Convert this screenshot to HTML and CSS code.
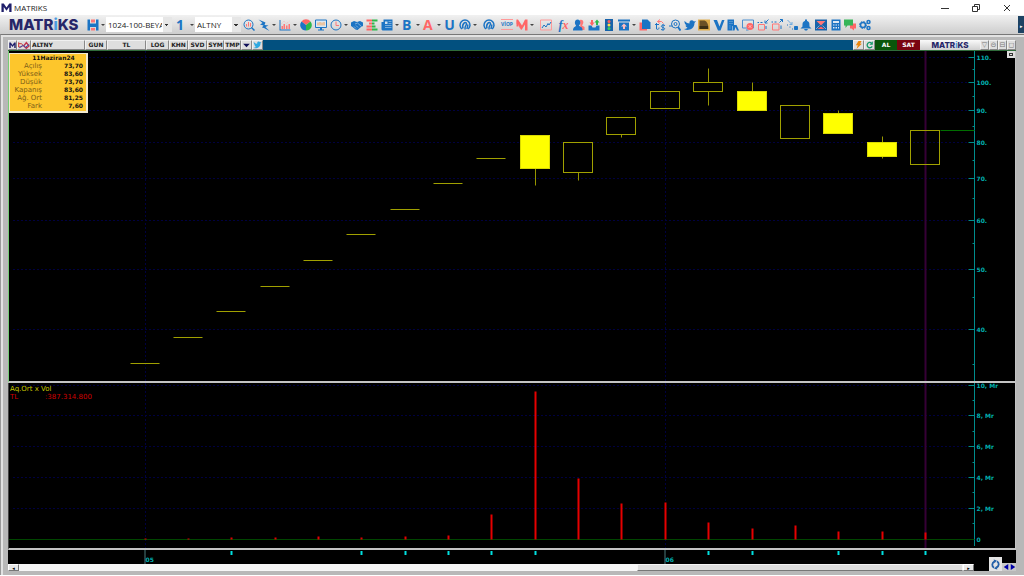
FILE: index.html
```html
<!DOCTYPE html>
<html lang="tr">
<head>
<meta charset="UTF-8">
<meta name="viewport" content="width=device-width, initial-scale=1.0">
<title>MATRIKS</title>
<link rel="stylesheet" href="styles.css">
</head>
<body>

<header class="titlebar">
  <svg class="app-icon" viewBox="0 0 24 24"><path d="M1 22V3h5l6 9 6-9h5v19h-5V11l-6 8-6-8v11z" fill="#1f1f6b"/></svg>
  <h1>MATRIKS</h1>
  <div class="window-buttons">
    <button aria-label="Küçült"><svg viewBox="0 0 8 8"><path d="M0 4.500h8"/></svg></button>
    <button aria-label="Önceki boyut"><svg viewBox="0 0 8 8"><path d="M.5 2.500h5v5h-5zM2.500 2V.5h5v5H6"/></svg></button>
    <button aria-label="Kapat"><svg viewBox="0 0 8 8"><path d="M1 1l6 6M7 1L1 7"/></svg></button>
  </div>
</header>

<nav class="toolbar">
  <div class="logo">MATR<span>i</span>KS</div>
  <div class="group files">
    <button class="drop" aria-label="Kaydet"><svg viewBox="0 0 24 24"><path d="M1 1h5v8h12V1h5v22h-5v-7H6v7H1z" fill="#1c74c4"/><path d="M8 1h8v6H8z" fill="#f77"/><path d="M8 18h8v5H8z" fill="#f77"/></svg></button>
    <select class="template" aria-label="Şablon"><option>1024-100-BEYAZ</option></select>
    <button class="drop letter" aria-label="Bir">1</button>
    <select class="symbol" aria-label="Sembol"><option>ALTNY</option></select>
  </div>
  <div class="group">
    <button aria-label="Grafik ara"><svg viewBox="0 0 24 24" fill="none" stroke="#1c74c4" stroke-width="2"><circle cx="11" cy="11" r="9"/><path d="M17 17l6 6" stroke-width="3"/><path d="M7 15v-5M11 15V6M15 15V8" stroke="#f77"/></svg></button>
    <button class="drop" aria-label="Çizgi"><svg viewBox="0 0 24 24"><path d="M1 1l14 6-2 5 8 1-6 3 8 8-11-6-4-1 3-4-7-2 5-3z" fill="#1c74c4"/></svg></button>
    <button class="drop" aria-label="Göstergeler"><svg viewBox="0 0 24 24"><path d="M1 2h2v19h20v2H1z" fill="#1c74c4"/><path d="M5 14h3v6H5zM9 10h3v10H9zM14 13h3v7h-3zM19 10h3v10h-3z" fill="#f77"/><path d="M5 9l5-5 5 5 6-5" fill="none" stroke="#f99" stroke-width="1" stroke-dasharray="2 2"/></svg></button>
    <button aria-label="Pasta"><svg viewBox="0 0 24 24"><path d="M12 12L3 5A11 11 0 0 1 21 5z" fill="#f66"/><path d="M12 12l9-7a11 11 0 0 1-9 18z" fill="#2db84c"/><path d="M12 12v11A11 11 0 0 1 3 5z" fill="#1c74c4"/></svg></button>
    <button aria-label="Ekran"><svg viewBox="0 0 24 24"><path d="M1 2h22v15H1z" fill="#d8e8f5" stroke="#1c74c4" stroke-width="2"/><path d="M10 17h4v4h4v2H6v-2h4z" fill="#1c74c4"/><path d="M6 13V7M10 13V6M14 13V7M18 13V6" stroke="#f8a050" stroke-width="2"/></svg></button>
    <button class="drop" aria-label="Saat"><svg viewBox="0 0 24 24" fill="none"><circle cx="12" cy="12" r="10" stroke="#1c74c4" stroke-width="2"/><path d="M12 5v8h6" stroke="#f77" stroke-width="2"/></svg></button>
    <button aria-label="Takas"><svg viewBox="0 0 24 24"><path d="M0 7l6-3 6 2 6-2 6 3v7l-4 2-7 6-4-1-6-5-3-2z" fill="#1c74c4"/><path d="M8 10l5-2 8 7M6 15l4 4M10 13l4 4" fill="none" stroke="#dfe9f3" stroke-width="1"/></svg></button>
    <button aria-label="Derinlik"><svg viewBox="0 0 24 24"><path d="M1 1h11v4H1zM6 7h6v4H6zM1 13h11v4H1zM1 19h11v4H1z" fill="#f66"/><path d="M12 1h11v4H12zM12 7h5v4h-5zM12 13h7v4h-7zM12 19h11v4H12z" fill="#2db84c"/></svg></button>
    <button class="drop" aria-label="Haberler"><svg viewBox="0 0 24 24"><path d="M5 1h18v22H3l-2-2V6h4z" fill="#1c74c4"/><path d="M8 5h5v5H8zM15 5h6v1h-6zM15 9h6v1h-6zM8 13h13v1H8zM8 17h13v1H8z" fill="#cfe1f2"/></svg></button>
    <button class="drop letter" aria-label="B">B</button>
    <button class="drop letter red" aria-label="A">A</button>
    <button class="letter" aria-label="U">U</button>
    <button class="drop" aria-label="Tarama"><svg viewBox="0 0 24 24" fill="none" stroke="#1c74c4"><path d="M6 20A10 10 0 1 1 18 20" stroke-width="3"/><path d="M8 19C5 10 13 4 15 9c1 3-4 4-3 12M17 11c2 3-1 5-1 9" stroke-width="3"/></svg></button>
  </div>
  <div class="group">
    <button aria-label="Kahin"><svg viewBox="0 0 24 24" fill="none" stroke="#1c74c4"><path d="M6 20A10 10 0 1 1 18 20" stroke-width="3"/><path d="M8 19C5 10 13 4 15 9c1 3-4 4-3 12M17 11c2 3-1 5-1 9" stroke-width="3"/></svg></button>
  </div>
  <div class="group">
    <button class="viop" aria-label="VIOP">VİOP</button>
    <button class="drop" aria-label="Matriks"><svg viewBox="0 0 24 24"><path d="M1 2l9 14V22L1 9z" fill="#f88"/><path d="M1 1h3l8 12 6-12h5v22h-5V11l-7 11L4 10v5H1z" fill="#f66"/></svg></button>
  </div>
  <div class="group">
    <button aria-label="Çizgi grafik"><svg viewBox="0 0 24 24" fill="none"><path d="M1 2h22v20H1z" stroke="#f99" stroke-width="2"/><path d="M4 18l4-6 4 4 4-7 2 3 4-6" stroke="#1c74c4" stroke-width="2"/></svg></button>
  </div>
  <div class="group">
    <button class="fx" aria-label="Fonksiyon"><i>f</i><i class="red">x</i></button>
    <button aria-label="Kullanıcılar"><svg viewBox="0 0 24 24"><path d="M14 2c7-2 9 6 4 11l5 3v6h-8z" fill="#f77"/><path d="M9 1c7 0 7 9 3 12 1 3 8 2 7 10H0c0-8 6-7 6-10C2 8 4 1 9 1z" fill="#1c74c4"/></svg></button>
    <button aria-label="Al ver"><svg viewBox="0 0 24 24"><path d="M1 13h6l2 4h6l2-4h6v10H1z" fill="#1c74c4"/><path d="M6 2h4v5h3l-5 7-5-7h3z" fill="#f66"/><path d="M16 12h4V7h3l-5-6-5 6h3z" fill="#2db84c"/></svg></button>
    <button aria-label="Sinyal"><svg viewBox="0 0 24 24"><path d="M4 0h16v24H4z" fill="#1763aa"/><circle cx="12" cy="5" r="3" fill="#ff5c5c"/><circle cx="12" cy="12" r="3" fill="#ffe14a"/><circle cx="12" cy="19" r="3" fill="#35d35c"/></svg></button>
    <button class="drop" aria-label="Yükle"><svg viewBox="0 0 24 24"><path d="M0 1h24v4H0zM2 7h20v16H2z" fill="#1c74c4"/><path d="M12 9l6 6h-4v5h-4v-5H6z" fill="#fbb"/></svg></button>
    <button aria-label="Kopyala"><svg viewBox="0 0 24 24"><path d="M1 7h15v16H1z" fill="#f66"/><path d="M6 1h11l6 6v13H6z" fill="#1c74c4"/></svg></button>
    <button aria-label="Döviz"><svg viewBox="0 0 24 24" fill="none"><path d="M7 5h8l4 4M12 1L7 5l5 4" stroke="#f77" stroke-width="2"/><path d="M2 11h8M5 8v12c3 2 5 0 5-3" stroke="#1c74c4" stroke-width="2"/><path d="M22 13c-7-3-10 3-4 4s3 7-4 4M18 10v13" stroke="#1c74c4" stroke-width="2"/></svg></button>
  </div>
  <div class="group tools">
    <button aria-label="Ara"><svg viewBox="0 0 24 24" fill="none" stroke="#1c74c4"><circle cx="13" cy="10" r="8" stroke-width="2"/><circle cx="13" cy="10" r="3" stroke-width="2"/><path d="M18 16l5 7" stroke-width="4"/><path d="M0 14h7" stroke-width="2"/></svg></button>
    <button aria-label="Twitter"><svg viewBox="0 0 24 24"><path d="M1 4q5 5 10 5c-1-7 6-8 9-4l4-1-3 4C21 20 8 25 0 20q5 0 7-3-4-1-4-4h2Q0 9 1 4z" fill="#1c74c4"/></svg></button>
    <button aria-label="D"><svg viewBox="0 0 24 24"><path d="M0 1h24v22H0z" fill="#e0ac4a"/><path d="M3 3h10q8 3 8 17H3z" fill="#6b5026"/><path d="M3 14h17v6H3z" fill="#3d2e14"/></svg></button>
    <button aria-label="V"><svg viewBox="0 0 24 24"><path d="M1 2h7l5 13 5-13h5l-8 21h-5z" fill="#1c74c4"/></svg></button>
    <button aria-label="Şirketler"><svg viewBox="0 0 24 24"><path d="M1 1h13v11h5l5 11h-4l-3-7-2 7H1z" fill="#1c74c4"/><path d="M5 5h2M9 5h2M5 9h2M9 9h2M5 14h2M5 18h2M11 14v9" stroke="#dce8f4" stroke-width="1"/></svg></button>
    <button aria-label="Ekran kapat"><svg viewBox="0 0 24 24" fill="none"><path d="M1 2h22v16H1zM8 22h5" stroke="#4b8fd0" stroke-width="2"/><circle cx="16" cy="15" r="7" fill="#f66"/><path d="M13 12l6 6M19 12l-6 6" stroke="#fff" stroke-width="1"/></svg></button>
    <button aria-label="İçeri"><svg viewBox="0 0 24 24" fill="none"><path d="M3 11h12v11H3z" stroke="#f77" stroke-width="2"/><path d="M1 7h3M7 7h4M23 1l-6 6M16 3v5h5M18 14v6" stroke="#1c74c4" stroke-width="2"/></svg></button>
    <button aria-label="Dışarı"><svg viewBox="0 0 24 24" fill="none"><path d="M3 10h13v12H3z" stroke="#f77" stroke-width="2"/><path d="M1 6h3M7 6h4M17 7l6-6M18 1h5v5M20 13v7" stroke="#1c74c4" stroke-width="2"/></svg></button>
    <button aria-label="Taşı"><svg viewBox="0 0 24 24" fill="none" stroke="#1c74c4" stroke-width="2"><path d="M3 2l9 9M12 6v5H7" stroke="#6eaade"/><path d="M17 15h6v6h-6z" fill="#1c74c4"/><path d="M2 12h2M7 16h2M12 20h2"/></svg></button>
    <button aria-label="Alarm"><svg viewBox="0 0 24 24"><path d="M10 1h4v3c5 1 5 5 5 11l4 4H1l4-4C5 9 5 5 10 4zM8 20h8l-2 3h-4z" fill="#1c74c4"/></svg></button>
    <button aria-label="Mesaj"><svg viewBox="0 0 24 24"><path d="M0 1h24v22H0z" fill="#1763aa"/><path d="M3 4h18l-9 9z" fill="#f77"/><path d="M2 20l7-7M22 20l-7-7" stroke="#e6eef6" stroke-width="1"/><path d="M5 20l7-5 7 5z" fill="#f66"/></svg></button>
    <button aria-label="Hesap makinesi"><svg viewBox="0 0 24 24"><path d="M3 1h18v22H3z" fill="#1c74c4"/><path d="M6 4h12v4H6zM6 11h3v2H6zM11 11h3v2h-3zM16 11h2v2h-2zM6 16h3v3H6zM11 16h3v3h-3zM16 16h2v3h-2z" fill="#dce8f4"/></svg></button>
    <button aria-label="Sohbet"><svg viewBox="0 0 24 24"><path d="M12 9h12v10h-4v4l-5-4h-3z" fill="#f66"/><path d="M0 1h18v12H7l-4 5v-5H0z" fill="#35b558"/></svg></button>
    <button aria-label="Ayarlar"><svg viewBox="0 0 24 24" fill="none" stroke="#1c74c4"><circle cx="8" cy="12" r="5" stroke-width="3"/><circle cx="8" cy="12" r="7" stroke-width="2" stroke-dasharray="3 2.500"/><circle cx="19" cy="6" r="3" stroke-width="3"/><circle cx="19" cy="18" r="3" stroke-width="3"/></svg></button>
  </div>
  <button class="overflow" aria-label="Diğer">&#9656;</button>
</nav>

<main class="frame">
  <div class="chart-bar">
    <button class="mark" aria-label="Menü"><svg viewBox="0 0 24 24"><path d="M1 22V3h5l6 9 6-9h5v19h-5V11l-6 8-6-8v11z" fill="#1f1f6b"/></svg></button>
    <button class="link" aria-label="Bağla"><svg viewBox="0 0 36 24" fill="none"><path d="M2 4v14h8q7-8 0-10H3" stroke="#c33" stroke-width="3"/><path d="M17 15l8-10 8 10-8 7z" stroke="#c2334a" stroke-width="4"/><path d="M4 20l12-7 6 6 12-9" stroke="#3a4fb0" stroke-width="3"/></svg></button>
    <button class="code">ALTNY</button>
    <button class="gun">GUN</button>
    <button class="tl">TL</button>
    <button class="log">LOG</button>
    <button>KHN</button>
    <button>SVD</button>
    <button class="tight">SYM</button>
    <button class="tight">TMP</button>
    <button class="small" aria-label="Liste"><svg viewBox="0 0 24 24"><path d="M2 8h20L12 19z" fill="#10105a"/></svg></button>
    <button class="small" aria-label="Tweetle"><svg viewBox="0 0 24 24"><path d="M1 3q5 5 10 5c-1-7 6-8 9-4l4-1-3 4C21 20 8 25 0 20q5 0 7-3-4-1-4-4h2Q0 9 1 3z" fill="#2fa8e0"/></svg></button>
    <span class="spacer"></span>
    <button class="small" aria-label="Hızlı emir"><svg viewBox="0 0 24 24"><path d="M12 0h9l-4 8h5L6 24l4-11H4z" fill="#e8870f"/></svg></button>
    <button class="small" aria-label="Yenile"><svg viewBox="0 0 24 24" fill="none"><path d="M18 6a8 8 0 1 0 2 10" stroke="#159a6a" stroke-width="4"/><path d="M22 1v10H12z" fill="#159a6a"/></svg></button>
    <button class="buy">AL</button>
    <button class="sell">SAT</button>
    <span class="brand">MATR<span>i</span>KS</span>
    <button class="mini" aria-label="Aşağı">&#9661;</button>
    <button class="mini" aria-label="Küçült">&#8861;</button>
    <button class="mini" aria-label="Büyüt">&#8863;</button>
    <button class="mini" aria-label="Kapat">&#9723;</button>
  </div>

  <section class="pane price">
    <svg id="price"></svg>
    <table class="info">
      <caption>11Haziran24</caption>
      <tr><th>Açılış</th><td>73,70</td></tr>
      <tr><th>Yüksek</th><td>83,60</td></tr>
      <tr><th>Düşük</th><td>73,70</td></tr>
      <tr><th>Kapanış</th><td>83,60</td></tr>
      <tr><th>Ağ. Ort</th><td>81,25</td></tr>
      <tr><th>Fark</th><td>7,60</td></tr>
    </table>
    <button class="maximize" aria-label="Paneli büyüt"></button>
  </section>

  <section class="pane volume">
    <svg id="volume"></svg>
    <div class="legend">
      <p>Aq.Ort x Vol</p>
      <p class="total"><span>TL</span><span>:387.314.800</span></p>
    </div>
  </section>

  <footer class="bottom">
    <div class="time">
      <svg id="dates"></svg>
      <div class="scrollbar">
        <button aria-label="Sola kaydır">&#9666;</button>
        <div class="track"></div>
        <div class="thumb"></div>
        <button aria-label="Sağa kaydır">&#9656;</button>
      </div>
    </div>
    <div class="corner">
      <button class="sync" aria-label="Eşitle"><svg viewBox="0 0 24 24" fill="none" stroke="#2360a8" stroke-width="4"><path d="M9 19C3 16 4 9 10 5M15 5c6 3 5 10-1 14"/><path d="M8 1l7 2-5 6zM16 23l-7-2 5-6z" fill="#2360a8" stroke="none"/></svg></button>
      <button class="step" aria-label="Geri"><svg viewBox="0 0 8 8"><path d="M7 0v8L1 4z"/></svg></button>
      <button class="step" aria-label="İleri"><svg viewBox="0 0 8 8"><path d="M1 0v8l6-4z"/></svg></button>
    </div>
  </footer>
</main>

<script src="chart.js"></script>
</body>
</html>
```
FILE: styles.css
```css
* {
  box-sizing: border-box;
}

body {
  margin: 0;
  height: 100vh;
  display: flex;
  flex-direction: column;
  background: #fff;
  font-family: "Open Sans", sans-serif;
  overflow: hidden;
}

button {
  margin: 0;
  padding: 0;
  border: none;
  background: none;
  color: inherit;
  font: inherit;
}

svg {
  display: block;
}

/* Window title */
.titlebar {
  display: flex;
  align-items: center;
  height: 15px;
  padding: 0 2px 0 1px;
  flex: none;
}

.app-icon {
  width: 11px;
  height: 11px;
}

.titlebar h1 {
  margin: 0 0 0 2px;
  font-size: 8px;
  line-height: 14px;
  font-weight: 400;
  color: #222;
}

.window-buttons {
  margin-left: auto;
  display: flex;
}

.window-buttons button {
  width: 31px;
  height: 14px;
  display: flex;
  align-items: center;
  justify-content: center;
}

.window-buttons svg {
  width: 8px;
  height: 8px;
  fill: none;
  stroke: #333;
}

/* Toolbar */
.toolbar {
  display: flex;
  align-items: center;
  height: 19px;
  flex: none;
  padding-left: 9px;
  background: linear-gradient(#f1f1f1, #cdcdcd);
  color: #1c74c4;
}

.logo,
.brand {
  font-family: Inter, sans-serif;
  font-weight: 800;
  color: #262668;
}

.logo {
  width: 76px;
  font-size: 15px;
  line-height: 18px;
}

.logo span,
.brand span {
  color: #4a9be0;
}

.group {
  display: flex;
  align-items: center;
  margin-right: 3px;
}

.group button {
  width: 15px;
  height: 17px;
  display: flex;
  align-items: center;
  justify-content: center;
}

.group svg {
  width: 12px;
  height: 12px;
  flex: none;
}

.group .drop {
  width: 21px;
  justify-content: flex-start;
  padding-left: 2px;
}

.drop::after {
  content: "";
  margin-left: auto;
  margin-right: 1px;
  border: 2px solid transparent;
  border-top-color: #444;
  border-bottom: none;
}

.group .letter {
  font-size: 14px;
  line-height: 16px;
  font-weight: 700;
}

.group .red {
  color: #f66;
}

.group .viop {
  font: 700 5px/7px "Open Sans", sans-serif;
  border: solid #f99;
  border-width: 1px 0;
  width: 12px;
  height: 11px;
  margin: 0 1px 0 2px;
}

.group .fx {
  font: 700 12px/14px "Liberation Serif", serif;
}

.toolbar select {
  appearance: none;
  height: 15px;
  border: none;
  border-radius: 0;
  padding: 0 10px 0 2px;
  font: 8px/14px "Open Sans", sans-serif;
  color: #222;
  background: linear-gradient(45deg, transparent 50%, #333 50%) right 5px center / 2px 2px no-repeat,
    linear-gradient(-45deg, transparent 50%, #333 50%) right 3px center / 2px 2px no-repeat,
    linear-gradient(#e6e6e6, #e6e6e6) right / 9px 15px no-repeat,
    #fff;
}

.template {
  width: 66px;
  margin-right: 2px;
}

.symbol {
  width: 46px;
}

.files {
  margin-right: 0;
}

.group.tools {
  width: 204px;
  margin-left: -2px;
  justify-content: space-between;
}

.group.tools button {
  width: 14px;
}

.overflow {
  margin-left: auto;
  width: 6px;
  height: 17px;
  background: #1d4263;
  color: #fff;
  font-size: 5px;
  line-height: 20px;
}

/* Chart window */
.frame {
  flex: 1;
  min-height: 0;
  display: flex;
  flex-direction: column;
  margin-bottom: 1px;
  padding: 5px 8px 4px 7px;
  background: #b8b8b8;
  border-top: 1px solid #777;
  border-left: 1px solid #999;
  box-shadow: inset 2px 2px #e2e2e2;
  font-family: "DejaVu Sans", sans-serif;
}

.chart-bar {
  display: flex;
  height: 11px;
  flex: none;
  background: #02507f;
  border-bottom: 1px solid #2f6b3a;
}

.chart-bar button {
  width: 19px;
  background: #dedede;
  border: 1px solid #f0f0f0;
  border-right-color: #888;
  border-bottom-color: #888;
  color: #222;
  font-weight: 700;
  font-size: 6px;
  line-height: 8px;
  text-align: center;
}

.chart-bar svg {
  width: 9px;
  height: 8px;
  margin: auto;
}

.chart-bar .mark {
  width: 9px;
}

.chart-bar .mark svg {
  width: 7px;
}

.chart-bar .link {
  width: 14px;
}

.chart-bar .link svg {
  width: 12px;
}

.chart-bar .code {
  width: 54px;
  text-align: left;
}

.chart-bar .gun {
  width: 22px;
}

.chart-bar .tl {
  width: 39px;
}

.chart-bar .log {
  width: 23px;
}

.chart-bar .tight {
  width: 17px;
}

.chart-bar .small {
  width: 11px;
}

.spacer {
  flex: 1;
}

.chart-bar .buy {
  width: 22px;
  background: #0b560b;
  border-color: #0b560b;
  color: #fff;
}

.chart-bar .sell {
  width: 23px;
  background: #7a0510;
  border-color: #7a0510;
  color: #fff;
}

.brand {
  width: 60px;
  background: linear-gradient(#fafafa, #cfcfcf);
  font-size: 8px;
  line-height: 10px;
  text-align: center;
}

.chart-bar .mini {
  width: 9px;
  color: #777;
  font-weight: 400;
  font-size: 7px;
}

/* Panes */
.pane {
  position: relative;
  min-height: 0;
  overflow: hidden;
  background: #000;
  border-bottom: 2px solid #c4c4c4;
  border-right: 1px solid #c4c4c4;
}

.pane svg {
  width: 100%;
  height: 100%;
}

.price {
  flex: 2 1 0;
  border-left: 1px solid #7c7;
}

.volume {
  flex: 1 1 0;
  border-left: 1px solid #444;
}

.pane text,
.time text {
  font-size: 6px;
  font-weight: 700;
  fill: #00b0b0;
}

.grid {
  stroke: #000040;
  stroke-dasharray: 2 2;
}

.axis {
  stroke: #008c8c;
}

.cursor {
  stroke: #360036;
  stroke-width: 2;
}

.candle {
  stroke: #a0a000;
  fill: #000;
}

.candle.down {
  fill: #ff0;
  stroke: #dada00;
}

.wick {
  stroke: #969600;
}

.last {
  stroke: #006e00;
}

.base {
  stroke: #004600;
}

.bar {
  fill: #e60000;
}

.tick {
  fill: #00e0e0;
}

.info {
  position: absolute;
  top: 0;
  left: 0;
  width: 79px;
  border: 1px solid #f2ead0;
  border-width: 1px 2px 2px 1px;
  background: #fdc62c;
  border-collapse: separate;
  border-spacing: 0;
  font-size: 6px;
  line-height: 8px;
}

.info caption {
  position: relative;
  z-index: 1;
  margin-bottom: -9px;
  padding-top: 2px;
  padding-left: 10px;
  font-weight: 700;
  line-height: 9px;
  color: #111;
}

.info tr:first-child > * {
  padding-top: 8px;
}

.info tr:last-child > * {
  padding-bottom: 1px;
}

.info th {
  width: 32px;
  padding: 0;
  font-size: 7px;
  font-weight: 400;
  text-align: right;
  color: #7d6018;
}

.info td {
  padding: 0 3px 0 0;
  font-weight: 700;
  text-align: right;
  color: #111;
}

.maximize {
  position: absolute;
  top: 0;
  right: 0;
  width: 8px;
  height: 7px;
  border: 1px solid #ddd;
  background: #ddd;
  outline: 1px solid #333;
  outline-offset: -3px;
}

.legend {
  position: absolute;
  top: 2px;
  left: 1px;
  font-size: 7px;
  line-height: 8px;
  color: #c8c800;
}

.legend p {
  margin: 0;
}

.total {
  display: flex;
  color: #d00000;
}

.total span:first-child {
  width: 35px;
}

/* Dates and scrollbar */
.bottom {
  display: flex;
  flex: none;
  height: 21px;
  background: #000;
}

.time {
  flex: 1;
}

.time > svg {
  width: 100%;
  height: 14px;
}

.scrollbar {
  display: flex;
  height: 7px;
  background: #b8b8b8;
}

.scrollbar button {
  width: 11px;
  background: #e8e8e8;
  border: 1px solid #fff;
  border-bottom-color: #777;
  border-right-color: #777;
  font-size: 5px;
  line-height: 4px;
}

.track {
  flex: 619;
  background: #f6f6f6;
}

.thumb {
  flex: 325;
  background: #dcdcdc;
  border: 1px solid #f4f4f4;
  border-bottom-color: #777;
}

.corner {
  width: 42px;
  display: flex;
  align-items: flex-end;
  justify-content: flex-end;
}

.sync {
  width: 13px;
  height: 14px;
  background: #e4e4e4;
}

.sync svg {
  width: 11px;
  height: 11px;
  margin: auto;
}

.step {
  width: 7px;
  height: 8px;
  background: #c8c8c8;
}

.step svg {
  width: 6px;
  height: 6px;
  margin: auto;
  fill: #0000a8;
}
```
FILE: chart.js
```js
// open, high, low, close, volume (Mr TL)
const days = [
  [35.25, 35.25, 35.25, 35.25, 0.03],
  [38.8, 38.8, 38.8, 38.8, 0.02],
  [42.65, 42.65, 42.65, 42.65, 0.08],
  [46.9, 46.9, 46.9, 46.9, 0.08],
  [51.6, 51.6, 51.6, 51.6, 0.16],
  [56.8, 56.8, 56.8, 56.8, 0.1],
  [62.4, 62.4, 62.4, 62.4, 0.15],
  [68.7, 68.7, 68.7, 68.7, 0.2],
  [75.55, 75.55, 75.55, 75.55, 1.6],
  [82.1, 82.1, 68.1, 72.8, 9.6],
  [71.6, 80.1, 69.6, 80.1, 3.93],
  [82.5, 87.7, 81.4, 87.7, 2.3],
  [90.8, 96.6, 90.8, 96.6, 2.35],
  [96.8, 105.2, 92, 99.9, 1.1],
  [96.6, 99.9, 90, 90, 0.7],
  [81.1, 92, 81.1, 92, 0.9],
  [89, 90.3, 82.9, 82.9, 0.5],
  [79.9, 81.7, 75.3, 76, 0.5],
  [73.7, 83.6, 73.7, 83.6, 0.4]
];
const months = { 0: '05', 12: '06' };
const tickDays = [2, 5, 6, 7, 8, 9, 13, 14, 16, 17, 18];

const price = document.getElementById('price');
const volume = document.getElementById('volume');
const dates = document.getElementById('dates');

function add(svg, tag, attrs, text) {
  const el = document.createElementNS('http://www.w3.org/2000/svg', tag);
  for (const key in attrs) el.setAttribute(key, attrs[key]);
  if (text) el.textContent = text;
  svg.appendChild(el);
}

function line(svg, cls, x1, y1, x2, y2) {
  add(svg, 'line', { class: cls, x1, y1, x2, y2 });
}

// centre of a pixel, so that thin lines stay sharp
const snap = v => Math.floor(v) + 0.5;

function draw() {
  const axisX = dates.clientWidth - 0.5;
  const first = 137;
  const step = (axisX - 48 - first) / (days.length - 1);
  const x = i => snap(first + i * step - 1);
  [price, volume, dates].forEach(svg => svg.replaceChildren());

  // price pane, log scale
  const h = price.clientHeight;
  const py = p => snap(6 + h * 0.815 * Math.log(110 / p));
  for (let p = 110; p >= 40; p -= 10) {
    line(price, 'grid', 4, py(p), axisX, py(p));
    line(price, 'axis', axisX - 6, py(p), axisX, py(p));
    line(price, 'axis', axisX - 2, py(p - 5), axisX, py(p - 5));
    add(price, 'text', { x: axisX + 2, y: py(p) + 2 }, p + '.');
  }
  for (const i in months) line(price, 'grid', x(+i), 0, x(+i), h);
  line(price, 'axis', axisX, 0, axisX, h);
  line(price, 'cursor', x(18), 0, x(18), h);
  days.forEach(([o, hi, lo, c], i) => {
    if (hi === lo) {
      line(price, 'candle', x(i) - 15, py(c), x(i) + 14, py(c));
      return;
    }
    const top = py(Math.max(o, c));
    const bottom = py(Math.min(o, c));
    if (py(hi) < top) line(price, 'wick', x(i), py(hi), x(i), top);
    if (py(lo) > bottom) line(price, 'wick', x(i), bottom, x(i), py(lo));
    add(price, 'rect', {
      class: c < o ? 'candle down' : 'candle',
      'fill-opacity': c < o ? 1 : 0,
      x: x(i) - 15, y: top, width: 29, height: bottom - top
    });
  });
  line(price, 'last', x(18) + 15, py(83.6), axisX, py(83.6));

  // volume pane
  const vh = volume.clientHeight;
  const vy = v => snap(vh - 9 - v * (vh - 11) / 10);
  for (let v = 0; v <= 10; v += 2) {
    if (v) line(volume, 'grid', 4, vy(v), axisX, vy(v));
    if (v) line(volume, 'axis', axisX - 6, vy(v), axisX, vy(v));
    if (v < 10) line(volume, 'axis', axisX - 2, vy(v + 1), axisX, vy(v + 1));
    add(volume, 'text', { x: axisX + 2, y: vy(v) + 2 }, v ? v + ', Mr' : '0');
  }
  for (const i in months) line(volume, 'grid', x(+i), 0, x(+i), vh);
  line(volume, 'axis', axisX, 0, axisX, vh - 2);
  line(volume, 'base', 0, vy(0), axisX, vy(0));
  line(volume, 'cursor', x(18), 0, x(18), vh);
  days.forEach((d, i) => {
    add(volume, 'rect', { class: 'bar', x: x(i) - 1, y: vy(d[4]), width: 2, height: Math.max(1, vy(0) - vy(d[4])) });
  });

  // dates
  tickDays.forEach(i => add(dates, 'rect', { class: 'tick', x: x(i), y: 1, width: 2, height: 4 }));
  for (const i in months) {
    add(dates, 'rect', { fill: '#4a7a7a', x: x(+i), y: 0, width: 1, height: 14 });
    add(dates, 'text', { x: x(+i) + 1, y: 12 }, months[i]);
  }
}

draw();
window.addEventListener('resize', draw);
```
